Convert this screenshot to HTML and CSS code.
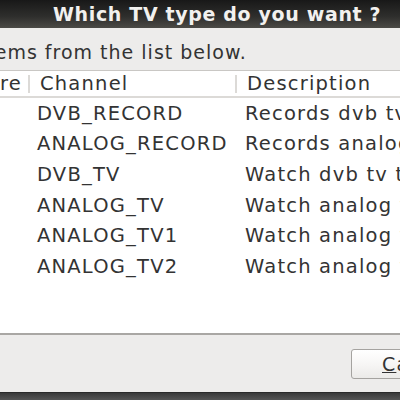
FILE: index.html
```html
<!DOCTYPE html>
<html>
<head>
<meta charset="utf-8">
<link rel="stylesheet" href="styles.css">
</head>
<body>
<div class="window">
  <div class="titlebar"><span class="title">Which TV type do you want ?</span></div>
  <div class="message"><span class="msg">items from the list below.</span></div>
  <div class="list">
    <div class="head">
      <div class="c1">re</div>
      <div class="c2">Channel</div>
      <div class="c3">Description</div>
    </div>
    <div class="rows">
      <div class="row"><div class="c1"></div><div class="c2">DVB_RECORD</div><div class="c3">Records dvb tv</div></div>
      <div class="row"><div class="c1"></div><div class="c2">ANALOG_RECORD</div><div class="c3">Records analog</div></div>
      <div class="row"><div class="c1"></div><div class="c2">DVB_TV</div><div class="c3">Watch dvb tv t</div></div>
      <div class="row"><div class="c1"></div><div class="c2">ANALOG_TV</div><div class="c3">Watch analog t</div></div>
      <div class="row"><div class="c1"></div><div class="c2">ANALOG_TV1</div><div class="c3">Watch analog t</div></div>
      <div class="row"><div class="c1"></div><div class="c2">ANALOG_TV2</div><div class="c3">Watch analog t</div></div>
    </div>
  </div>
  <div class="buttons">
    <button class="btn"><span class="u">C</span>ancel</button>
  </div>
  <div class="bottom"></div>
</div>
</body>
</html>
```
FILE: styles.css
```css
html, body {
  margin: 0;
  padding: 0;
}
body {
  width: 400px;
  height: 400px;
  overflow: hidden;
  background: #edeceb;
  font-family: "DejaVu Sans", sans-serif;
  color: #333333;
}
.window {
  display: flex;
  flex-direction: column;
  height: 400px;
}
.titlebar {
  height: 28px;
  flex: none;
  background: linear-gradient(#181818, #2f2f2d 60%, #4b4a46);
  display: flex;
  align-items: center;
  padding-left: 53px;
  white-space: nowrap;
}
.title {
  color: #f2f1ef;
  font-weight: bold;
  font-size: 19px;
  letter-spacing: 0.65px;
}
.message {
  height: 42px;
  flex: none;
  display: flex;
  align-items: center;
  padding-top: 6px;
  box-sizing: border-box;
  overflow: hidden;
  white-space: nowrap;
}
.msg {
  font-size: 19px;
  letter-spacing: 1px;
  margin-left: -20px;
}
.list {
  height: 262px;
  flex: none;
  background: #fff;
  border-top: 1px solid #c9c7c4;
  border-bottom: 2px solid #a9a7a4;
  overflow: hidden;
  white-space: nowrap;
  font-size: 19.5px;
  letter-spacing: 1.2px;
}
.head {
  display: flex;
  height: 25px;
  align-items: center;
  border-bottom: 2px solid #dcdad7;
}
.head .c1, .head .c2 {
  border-right: 2px solid #dcdad7;
  height: 18px;
  line-height: 18px;
}
.c1 {
  width: 28px;
  flex: none;
  overflow: hidden;
}
.c2 {
  width: 195px;
  flex: none;
}
.head .c2 { padding-left: 10px; }
.c3 {
  flex: none;
}
.head .c3 { padding-left: 10px; }
.row {
  display: flex;
  height: 30.6px;
  align-items: center;
}
.row .c2 { padding-left: 9px; }
.row .c3 { padding-left: 13px; }
.buttons {
  flex: 1;
  display: flex;
  align-items: center;
  padding-left: 351px;
}
.btn {
  width: 120px;
  height: 30px;
  flex: none;
  border: 1px solid #a5a3a0;
  border-radius: 3px;
  background: linear-gradient(#ffffff, #f7f6f5 50%, #ebeae8);
  font-family: "DejaVu Sans", sans-serif;
  font-size: 19px;
  letter-spacing: 1.1px;
  color: #333333;
  text-align: left;
  padding: 0 0 0 30px;
  margin-top: 0;
}
.u { text-decoration: underline; }
.bottom {
  height: 7px;
  flex: none;
  background: linear-gradient(#3a3a3a, #555);
  border-top: 1px solid #2a2a2a;
}
```
